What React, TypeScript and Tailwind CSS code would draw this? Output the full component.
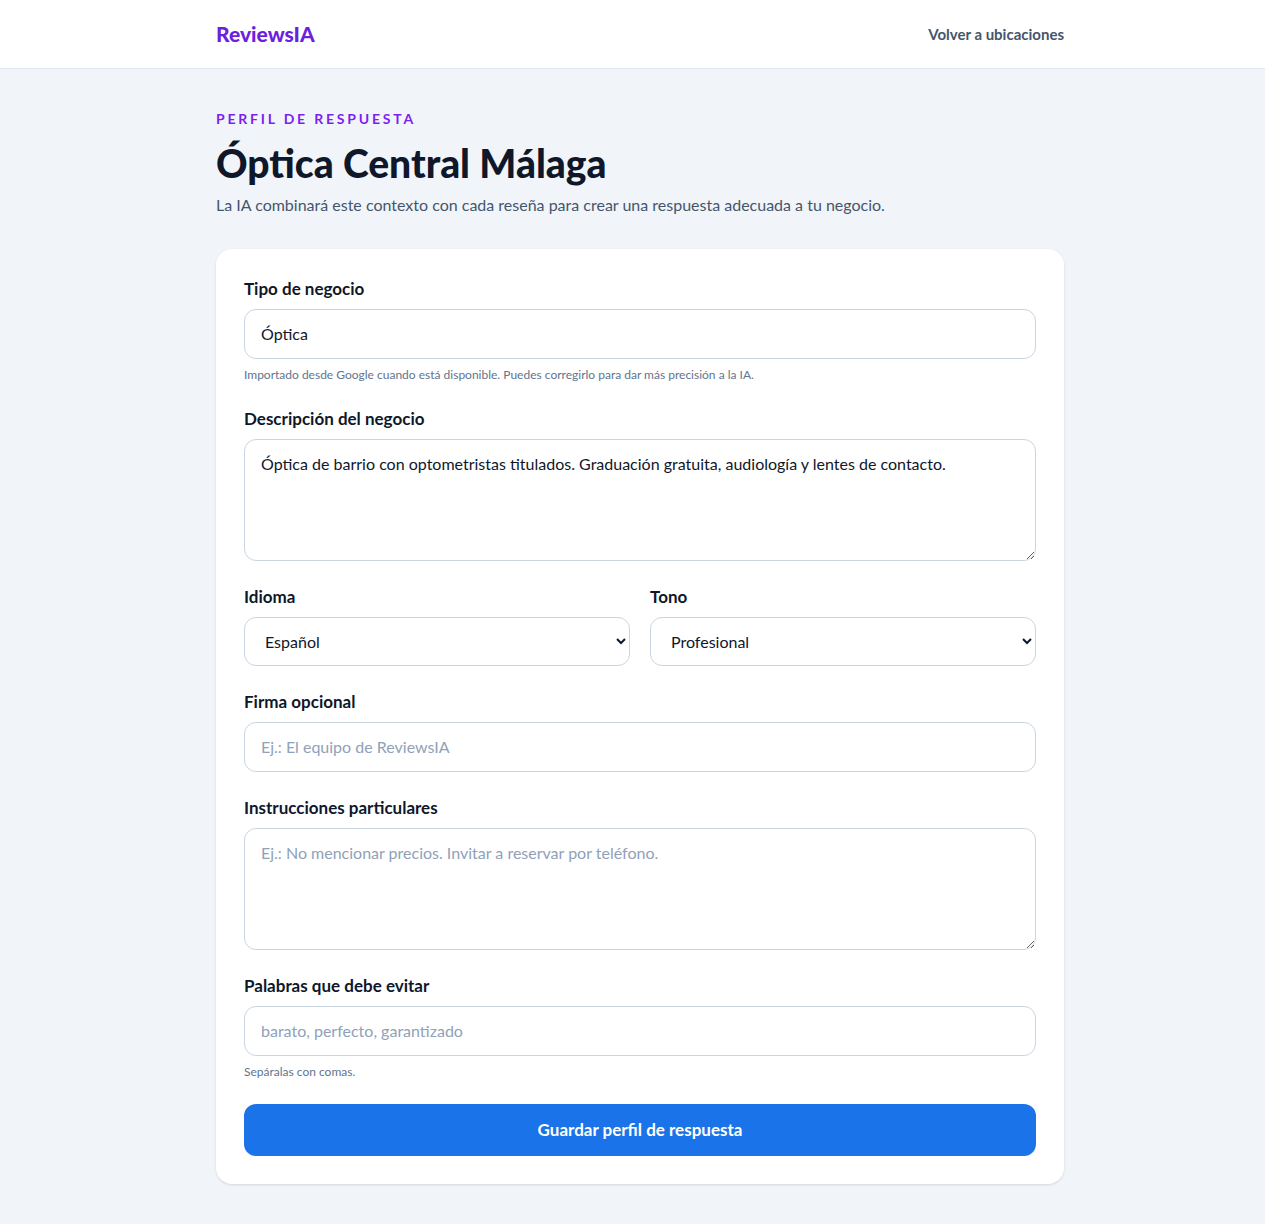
export default function App() {
  const font = { fontFamily: 'Lato, "Noto Sans", sans-serif' }
  const label = 'block text-[17px] leading-6 font-bold text-slate-900 mb-2'
  const field =
    'w-full rounded-xl border border-slate-300 bg-white px-4 py-3 text-base leading-6 text-slate-900 placeholder-slate-400 focus:outline-none'

  return (
    <div className="min-h-screen bg-[#f1f5f9]" style={font}>
      {/* Header */}
      <header className="h-[69px] bg-white border-b border-slate-200">
        <div className="ml-[216px] w-[848px] h-full flex items-center justify-between">
          <span className="text-[21px] font-black text-[#6d1fe0]">ReviewsIA</span>
          <a className="text-[15px] font-bold text-slate-600">Volver a ubicaciones</a>
        </div>
      </header>

      <main className="ml-[216px] w-[848px] pt-10 pb-10">
        <p className="text-sm leading-5 font-bold tracking-[0.2em] text-[#7c1ff0]">PERFIL DE RESPUESTA</p>
        <h1 className="mt-3 text-[39px] font-black text-[#0f172a] leading-[44px]">Óptica Central Málaga</h1>
        <p className="mt-2 text-base leading-6 text-slate-600">
          La IA combinará este contexto con cada reseña para crear una respuesta adecuada a tu negocio.
        </p>

        <form className="mt-8 rounded-2xl bg-white shadow-sm px-7 pt-7 pb-7 space-y-6">
          <div>
            <label className={label}>Tipo de negocio</label>
            <input className={field} defaultValue="Óptica" />
            <p className="mt-2 text-xs leading-4 text-slate-500">
              Importado desde Google cuando está disponible. Puedes corregirlo para dar más precisión a la IA.
            </p>
          </div>

          <div>
            <label className={label}>Descripción del negocio</label>
            <textarea
              rows={4}
              className={field + ' block'}
              defaultValue="Óptica de barrio con optometristas titulados. Graduación gratuita, audiología y lentes de contacto."
            />
          </div>

          <div className="grid grid-cols-2 gap-5">
            <div>
              <label className={label}>Idioma</label>
              <select className={field + ' h-[49px]'} defaultValue="es">
                <option value="es">Español</option>
                <option value="en">English</option>
              </select>
            </div>
            <div>
              <label className={label}>Tono</label>
              <select className={field + ' h-[49px]'} defaultValue="pro">
                <option value="pro">Profesional</option>
                <option value="cer">Cercano</option>
              </select>
            </div>
          </div>

          <div>
            <label className={label}>Firma opcional</label>
            <input className={field} placeholder="Ej.: El equipo de ReviewsIA" />
          </div>

          <div>
            <label className={label}>Instrucciones particulares</label>
            <textarea
              rows={4}
              className={field + ' block'}
              placeholder="Ej.: No mencionar precios. Invitar a reservar por teléfono."
            />
          </div>

          <div>
            <label className={label}>Palabras que debe evitar</label>
            <input className={field} placeholder="barato, perfecto, garantizado" />
            <p className="mt-2 text-xs leading-4 text-slate-500">Sepáralas con comas.</p>
          </div>

          <button
            type="button"
            className="w-full rounded-xl bg-[#1a73e8] py-3.5 text-[17px] leading-6 font-bold text-white"
          >
            Guardar perfil de respuesta
          </button>
        </form>
      </main>
    </div>
  )
}
